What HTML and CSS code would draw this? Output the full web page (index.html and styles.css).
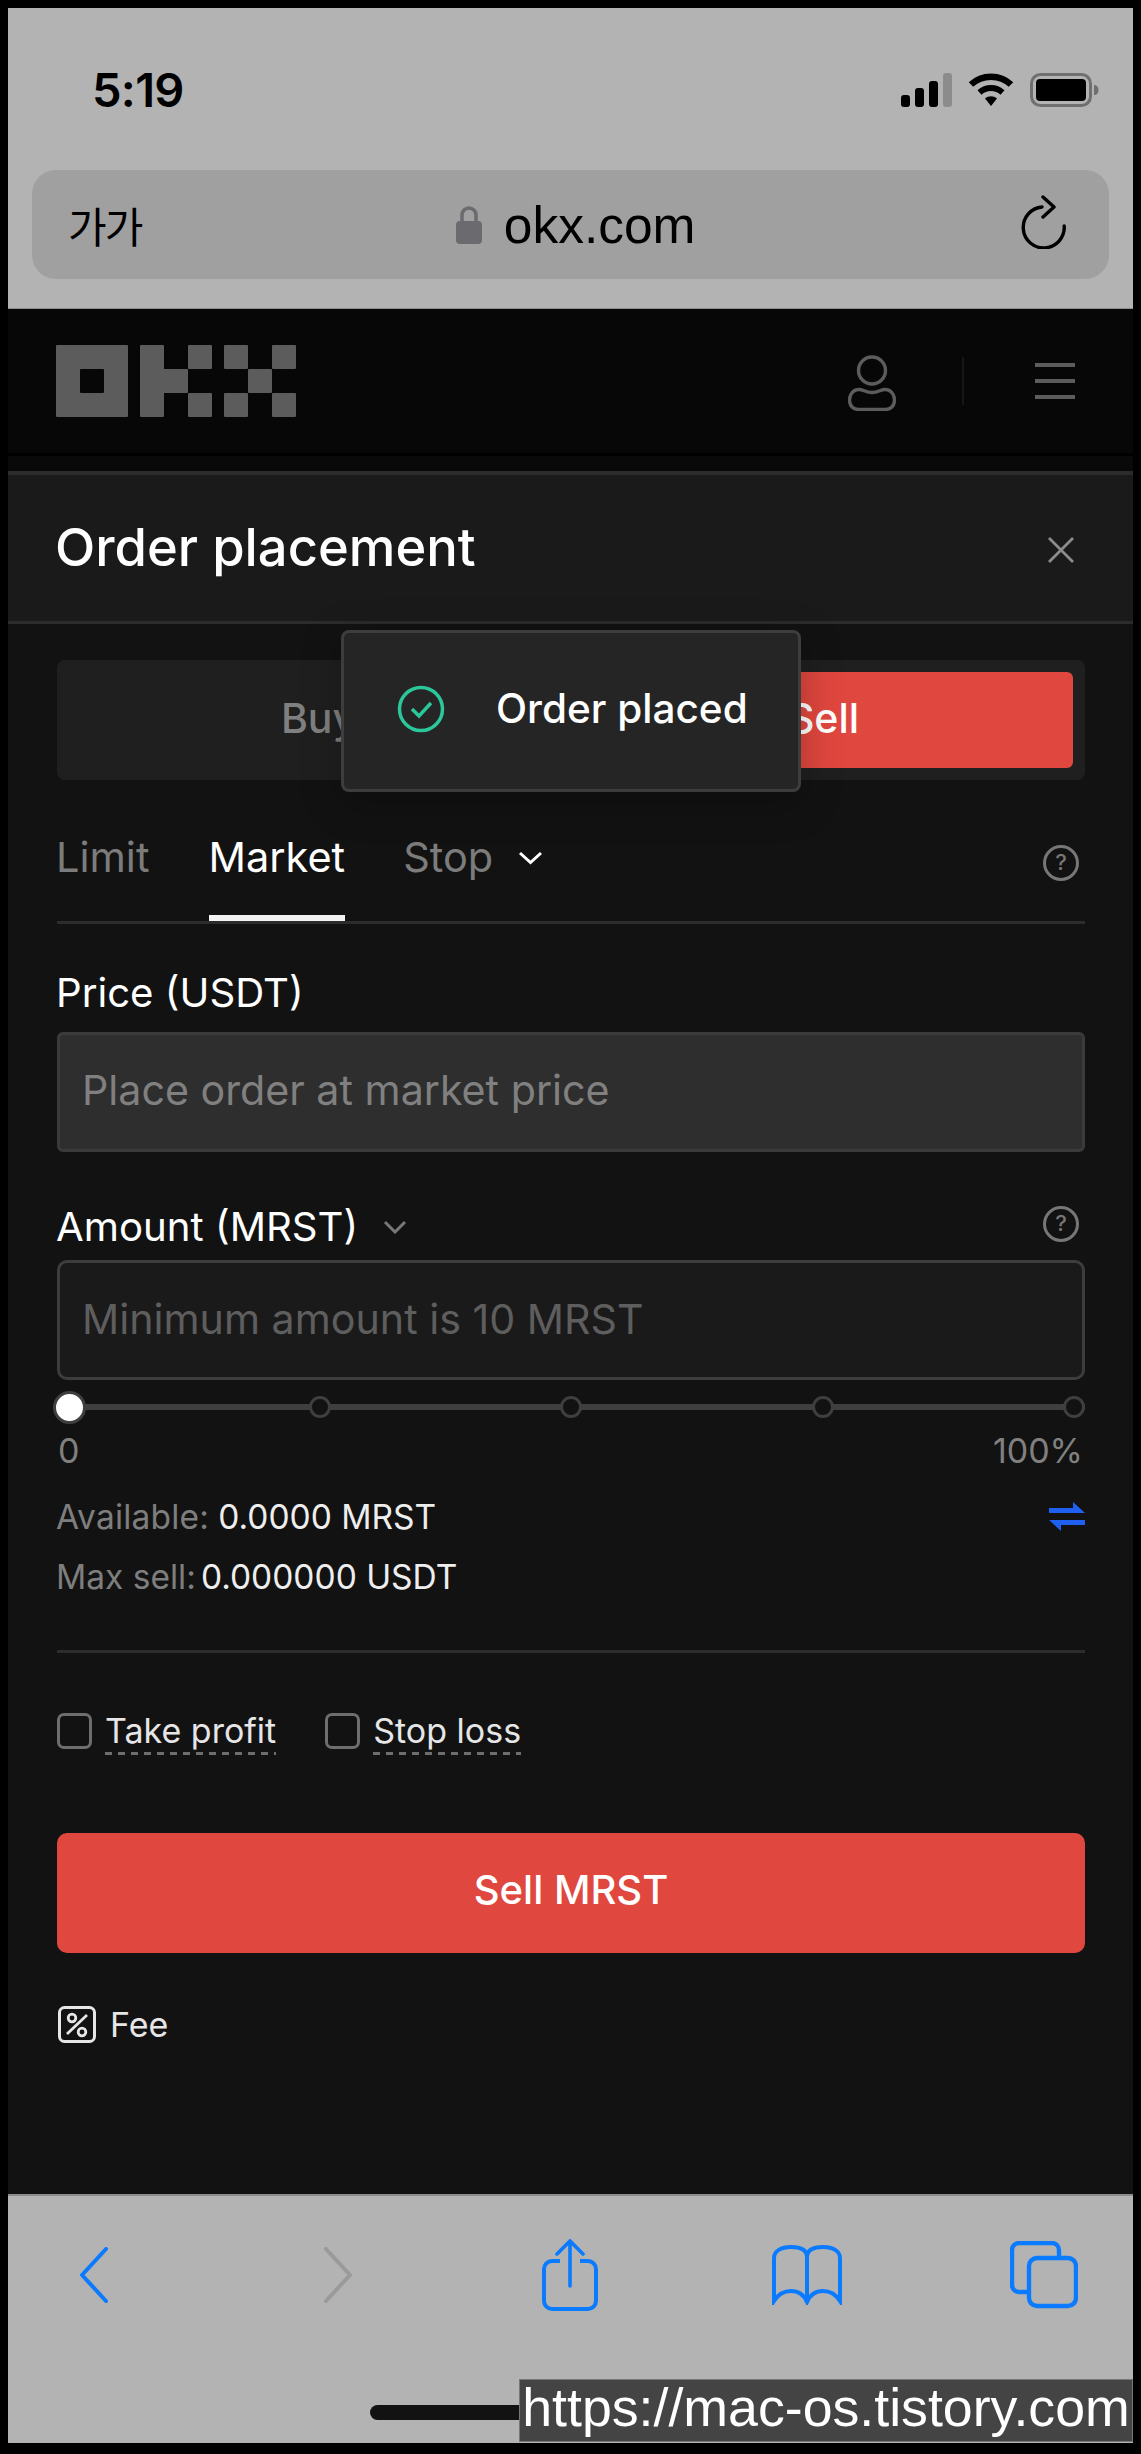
FILE: index.html
```html
<!DOCTYPE html>
<html lang="en">
<head>
<meta charset="utf-8">
<title>Order placement</title>
<link rel="stylesheet" href="styles.css">
</head>
<body>
<div class="phone">
  <header class="chrome">
    <div class="status">
      <span class="time">5:19</span>
      <div class="status-icons">
        <svg class="sig" width="51" height="34" viewBox="0 0 51 34"><rect x="0" y="22" width="9" height="12" rx="3" fill="#000"/><rect x="14" y="15" width="9" height="19" rx="3" fill="#000"/><rect x="28" y="8" width="9" height="26" rx="3" fill="#000"/><rect x="42" y="0" width="9" height="34" rx="3" fill="#8c8c8c"/></svg>
        <svg class="wifi" width="46" height="34" viewBox="0 0 46 34"><path d="M3 11.500C14 1 32 1 43 11.500" fill="none" stroke="#000" stroke-width="6.500"/><path d="M11.500 19.500C18 13.500 28 13.500 34.500 19.500" fill="none" stroke="#000" stroke-width="6"/><path d="M17 25.500C20.500 22.500 25.500 22.500 29 25.500L23 33Z" fill="#000"/></svg>
        <svg class="batt" width="69" height="34" viewBox="0 0 69 34"><rect x="1.500" y="1.500" width="59" height="31" rx="9" fill="none" stroke="#6f6f6f" stroke-width="3"/><rect x="6" y="6" width="50" height="22" rx="4" fill="#000"/><path d="M64 12c3 0 4.500 2 4.500 5s-1.500 5-4.500 5z" fill="#6f6f6f"/></svg>
      </div>
    </div>
    <div class="urlbar">
      <span class="aa">가가</span>
      <div class="url">
        <svg class="lock" width="28" height="40" viewBox="0 0 28 40"><path d="M7 18V10a7 7 0 0 1 14 0v8" fill="none" stroke="#6a6a6f" stroke-width="3.500"/><rect x="1" y="16" width="26" height="23" rx="4" fill="#6a6a6f"/></svg>
        <span class="url-text">okx.com</span>
      </div>
      <svg class="reload" width="46" height="54" viewBox="0 0 46 54"><path d="M21 12A20.500 20.500 0 1 0 43.200 31" fill="none" stroke="#000" stroke-width="3.400" stroke-linecap="round"/><path d="M22 2l11 10-11 10" fill="none" stroke="#000" stroke-width="3.400" stroke-linecap="round" stroke-linejoin="round"/></svg>
    </div>
  </header>

  <nav class="sitebar">
    <svg class="logo" width="240" height="72" viewBox="0 0 240 72" fill="#5c5c5c"><path fill-rule="evenodd" d="M1 0h70a1 1 0 0 1 1 1v70a1 1 0 0 1-1 1H1a1 1 0 0 1-1-1V1a1 1 0 0 1 1-1zM25 24a1 1 0 0 0-1 1v22a1 1 0 0 0 1 1h22a1 1 0 0 0 1-1V25a1 1 0 0 0-1-1z"/><path d="M85 0h22a1 1 0 0 1 1 1v23h23a1 1 0 0 1 1 1v22a1 1 0 0 1-1 1h-23v23a1 1 0 0 1-1 1H85a1 1 0 0 1-1-1V1a1 1 0 0 1 1-1z"/><rect x="132" width="24" height="24" rx="1"/><rect x="132" y="48" width="24" height="24" rx="1"/><rect x="168" width="24" height="24" rx="1"/><rect x="168" y="48" width="24" height="24" rx="1"/><rect x="192" y="24" width="24" height="24" rx="1"/><rect x="216" width="24" height="24" rx="1"/><rect x="216" y="48" width="24" height="24" rx="1"/></svg>
    <div class="site-actions">
      <svg class="user" width="48" height="56" viewBox="0 0 48 56" fill="none" stroke="#5c5c5c" stroke-width="3.400"><circle cx="24" cy="15.500" r="13.500"/><path d="M11 34.500c4 0 7 3 13 3s9-3 13-3c5 0 9.500 4 9.500 10.500 0 6-4 9.500-9 9.500h-27c-5 0-9-3.500-9-9.500 0-6.500 4.500-10.500 9.500-10.500z"/></svg>
      <span class="vline"></span>
      <span class="burger"><i></i><i></i><i></i></span>
    </div>
  </nav>
  <div class="strip"></div>

  <main class="modal">
    <div class="modal-head">
      <h1 class="modal-title">Order placement</h1>
      <svg class="close" width="28" height="26" viewBox="0 0 28 26"><path d="M2 1l24 24M26 1L2 25" stroke="#8c8c8c" stroke-width="2.800"/></svg>
    </div>
    <div class="modal-body">
      <div class="segment">
        <span class="seg seg-buy">Buy</span>
        <span class="seg seg-sell">Sell</span>
      </div>
      <div class="tabs">
        <span class="tab tab-limit">Limit</span>
        <span class="tab tab-on">Market</span>
        <span class="tab tab-stop">Stop
          <svg class="tab-chev" width="25" height="14" viewBox="0 0 25 14"><path d="M2 2l10.500 9.500L23 2" fill="none" stroke="#fff" stroke-width="3"/></svg>
        </span>
        <svg class="help tabs-help" width="36" height="36" viewBox="0 0 36 36"><circle cx="18" cy="18" r="16.500" fill="none" stroke="#777" stroke-width="3"/><text x="18" y="25" class="help-q">?</text></svg>
      </div>
      <div class="field-label price-label">Price (USDT)</div>
      <div class="input input-fixed">Place order at market price</div>
      <div class="field-label amount-label">
        <span>Amount (MRST)</span>
        <svg class="amt-chev" width="24" height="14" viewBox="0 0 24 14"><path d="M2 2l10 10L22 2" fill="none" stroke="#777" stroke-width="3"/></svg>
        <svg class="help" width="36" height="36" viewBox="0 0 36 36"><circle cx="18" cy="18" r="16.500" fill="none" stroke="#777" stroke-width="3"/><text x="18" y="25" class="help-q">?</text></svg>
      </div>
      <div class="input input-amount">Minimum amount is 10 MRST</div>
      <div class="slider">
        <span class="dot dot-on"></span><span class="dot"></span><span class="dot"></span><span class="dot"></span><span class="dot"></span>
      </div>
      <div class="slider-labels"><span>0</span><span>100%</span></div>
      <div class="info-row">
        <span class="muted">Available:</span><span class="val">0.0000 MRST</span>
        <svg class="swap" width="36" height="30" viewBox="0 0 36 30" fill="#2060f0"><path d="M0 6h24V0l12 11H0zM0 18h36v5H12v6L0 18z"/></svg>
      </div>
      <div class="info-row info-row-2"><span class="muted">Max sell:</span><span class="val">0.000000 USDT</span></div>
      <div class="divider"></div>
      <div class="checks">
        <label class="check"><span class="box"></span><span class="check-text">Take profit</span></label>
        <label class="check"><span class="box"></span><span class="check-text">Stop loss</span></label>
      </div>
      <button class="submit">Sell MRST</button>
      <div class="fee">
        <svg width="38" height="37" viewBox="0 0 38 37" fill="none" stroke="#e6e6e6" stroke-width="3"><rect x="1.500" y="1.500" width="35" height="34" rx="5"/><path d="M29 9L9 28" stroke-width="2.800"/><circle cx="14" cy="12" r="3.800" stroke-width="2.800"/><circle cx="24" cy="26" r="3.800" stroke-width="2.800"/></svg>
        <span>Fee</span>
      </div>
    </div>
    <div class="toast">
      <svg width="48" height="48" viewBox="0 0 48 48" fill="none" stroke="#2bc79a"><circle cx="24" cy="24" r="21.500" stroke-width="3.500"/><path d="M15 24l7 7 12-13" stroke-width="3.500"/></svg>
      <span>Order placed</span>
    </div>
  </main>

  <footer class="toolbar">
    <div class="tools">
      <svg class="tool-back" width="30" height="56" viewBox="0 0 30 56" fill="none" stroke="#0a7aff" stroke-width="4" stroke-linecap="round" stroke-linejoin="round"><path d="M27 2L3 28l24 26"/></svg>
      <svg class="tool-fwd" width="30" height="56" viewBox="0 0 30 56" fill="none" stroke="#9a9a9a" stroke-width="4" stroke-linecap="round" stroke-linejoin="round"><path d="M3 2l24 26L3 54"/></svg>
      <svg class="tool-share" width="56" height="72" viewBox="0 0 56 72" fill="none" stroke="#0a7aff" stroke-width="3.600"><path d="M18 22H10a8 8 0 0 0-8 8v32a8 8 0 0 0 8 8h36a8 8 0 0 0 8-8V30a8 8 0 0 0-8-8h-8" stroke-width="4"/><path d="M28 47V2M15 15L28 2l13 13" stroke-linecap="round"/></svg>
      <svg class="tool-book" width="72" height="60" viewBox="0 0 72 60" fill="none" stroke="#0a7aff" stroke-width="4"><path d="M36 12C36 5 30 2 20 2 10 2 3 6 3 13v43c5-8 11-10 17-10 8 0 13 4 16 11 3-7 8-11 16-11 6 0 12 2 17 10V13C69 6 62 2 52 2 42 2 36 5 36 12zV56"/></svg>
      <svg class="tool-tabs" width="68" height="68" viewBox="0 0 68 68" fill="none" stroke="#0a7aff" stroke-width="4.400"><path d="M17 51H9a7 7 0 0 1-7-7V9a7 7 0 0 1 7-7h33a7 7 0 0 1 7 7v6"/><rect x="19" y="17" width="47" height="48" rx="8"/></svg>
    </div>
    <span class="home"></span>
    <div class="watermark">https://mac-os.tistory.com</div>
  </footer>
</div>
</body>
</html>
```
FILE: styles.css
```css
* { box-sizing: border-box; margin: 0; padding: 0; }
html, body { background: #000; }
body { width: 1141px; height: 2454px; overflow: hidden; font-family: Inter, "Noto Sans", sans-serif; }
.phone { display: flex; flex-direction: column; height: 2454px; padding: 8px 8px 11px; }

.chrome { height: 301px; background: #b3b3b3; flex: none; border-bottom: 1px solid #8c8c8c; padding: 0 24px; }
.status { height: 162px; display: flex; justify-content: space-between; align-items: flex-start; padding: 65px 10px 0 0; }
.time { font: 600 47px/34px Inter, sans-serif; color: #000; margin-left: 60px; letter-spacing: -.7px; }
.status-icons { display: flex; align-items: center; gap: 16px; }
.urlbar { height: 109px; background: #a0a0a0; border-radius: 24px; display: flex; align-items: center; justify-content: space-between; padding: 0 42px 0 36px; }
.aa { font: 400 42px/1 "Noto Sans CJK KR", sans-serif; color: #000; letter-spacing: -2px; }
.url { display: flex; align-items: center; gap: 21px; margin-right: 12px; font: 400 51.500px/1 "Liberation Sans", sans-serif; color: #000; }
.url-text { padding-top: 2px; }
.reload { margin-top: -6px; }

.sitebar { height: 144px; background: #070707; flex: none; display: flex; align-items: center; justify-content: space-between; padding: 0 58px 0 48px; }
.site-actions { display: flex; align-items: center; }
.vline { width: 2px; height: 48px; background: #161616; margin: 0 71px 0 66px; }
.user { margin-top: 4px; }
.burger { display: flex; flex-direction: column; gap: 12px; width: 40px; }
.burger i { display: block; height: 4px; background: #5c5c5c; }
.strip { height: 22px; flex: none; background: #090909; border-top: 3px solid #000; border-bottom: 4px solid #2c2c2c; }

.modal { flex: 1; background: #121212; position: relative; display: flex; flex-direction: column; min-height: 0; }
.modal-head { height: 149px; flex: none; background: #1a1a1a; border-bottom: 3px solid #2c2c2c; display: flex; align-items: center; justify-content: space-between; padding: 0 58px 2px 47px; }
.modal-title { font: 500 52.500px/1.2 Inter, sans-serif; color: #fff; }
.close { margin-top: 6px; }
.modal-body { padding: 36px 48px 0 49px; }

.segment { height: 120px; background: #1f1f1f; border-radius: 8px; display: flex; padding: 12px; }
.seg { flex: 1; display: flex; align-items: center; justify-content: center; padding-bottom: 4px; font: 500 41px/1 Inter, sans-serif; }
.seg-buy { color: #808080; padding-right: 6px; }
.seg-sell { background: #e0473e; color: #fff; border-radius: 6px; }

.tabs { height: 144px; display: flex; align-items: flex-end; border-bottom: 3px solid #2c2c2c; }
.tab { font: 400 41.500px/1 Inter, sans-serif; color: #7c7c7c; height: 84px; margin-right: 58px; display: flex; align-items: flex-start; }
.tab-limit { margin-right: 59px; margin-left: -1px; }
.tab-on { color: #fff; border-bottom: 6px solid #f2f2f2; }
.tab-stop { gap: 25px; margin-right: 0; }
.tab-chev { margin-top: 14px; }
.tabs-help { margin: 0 6px 40px auto; }
.help-q { font: 500 22px Inter, sans-serif; fill: #777; text-anchor: middle; }

.field-label { font: 400 40.200px/1 Inter, sans-serif; color: #fff; margin-left: -1px; }
.price-label { margin-top: 49px; height: 59px; }
.input { height: 120px; border-radius: 6px; display: flex; align-items: center; padding: 0 22px 2px; font: 400 41.200px/1 Inter, sans-serif; }
.input-fixed { background: #2e2e2e; border: 3px solid #3b3b3b; color: #808080; }
.amount-label { height: 108px; padding-top: 42px; display: flex; align-items: center; }
.amt-chev { margin-left: 25px; }
.amount-label .help { margin: -6px 6px 0 auto; }
.input-amount { background: #1a1a1a; border: 3px solid #3d3d3d; color: #5e5e5e; border-radius: 10px; padding-bottom: 0; }

.slider { height: 50px; margin-top: 2px; display: flex; justify-content: space-between; align-items: center; position: relative; }
.slider::before { content: ""; position: absolute; left: 0; right: 0; top: 22px; height: 6px; background: #3f3f3f; }
.dot { width: 22px; height: 22px; border-radius: 50%; background: #121212; border: 3px solid #3f3f3f; position: relative; flex: none; }
.dot-on { width: 33px; height: 33px; background: #fff; margin: 0 -7px 0 -4px; }
.slider-labels { display: flex; justify-content: space-between; font: 400 34px/1 Inter, sans-serif; color: #808080; margin-top: 2px; padding: 0 2px 0 1px; }
.info-row { display: flex; align-items: center; font: 400 33.500px/40px Inter, sans-serif; margin: 29px 0 0 -1px; gap: 9px; }
.info-row .muted { letter-spacing: .2px; }
.info-row-2 { margin-top: 20px; gap: 5px; }
.info-row-2 .muted { letter-spacing: 0; }
.muted { color: #7e7e7e; }
.val { color: #eee; }
.swap { margin-left: auto; }
.divider { height: 3px; background: #2c2c2c; margin-top: 53px; }
.checks { display: flex; gap: 49px; margin-top: 60px; }
.check { display: flex; gap: 13px; align-items: flex-start; font: 400 34px/36px Inter, sans-serif; color: #e6e6e6; }
.box { width: 35px; height: 36px; border: 3px solid #6e6e6e; border-radius: 7px; }
.check-text { height: 42px; background: linear-gradient(90deg, #6e6e6e 7px, transparent 7px) left bottom / 13px 3px repeat-x; }
.submit { display: block; width: 100%; height: 120px; margin-top: 78px; padding-bottom: 6px; background: #e0473e; color: #fff; border: 0; border-radius: 10px; font: 500 40px/1 Inter, sans-serif; }
.fee { display: flex; align-items: center; gap: 14px; margin-top: 53px; font: 400 34px/1 Inter, sans-serif; color: #e6e6e6; }
.fee svg { margin-left: 1px; }

.toast { position: absolute; left: 333px; top: 155px; width: 460px; height: 162px; background: #252525; border: 3px solid #3d3d3d; border-radius: 8px; display: flex; align-items: center; gap: 51px; padding: 0 0 4px 53px; font: 500 40.500px/1 Inter, sans-serif; color: #fff; box-shadow: 0 10px 40px rgba(0,0,0,.25); }

.toolbar { height: 249px; flex: none; background: #b3b3b3; position: relative; border-top: 2px solid #8c8c8c; }
.tools { display: flex; align-items: center; padding-left: 71px; height: 158px; }
.tool-fwd { margin-left: 214px; }
.tool-share { margin-left: 189px; }
.tool-book { margin-left: 173px; }
.tool-tabs { margin-left: 167px; }
.home { position: absolute; left: 362px; top: 209px; width: 170px; height: 15px; border-radius: 8px; background: #121212; }
.watermark { position: absolute; right: 0; bottom: 1px; width: 614px; height: 63px; background: #444; border: 1px solid #777; color: #fff; font: 400 53.700px/54px "Liberation Sans", sans-serif; text-align: center; white-space: nowrap; }
```
